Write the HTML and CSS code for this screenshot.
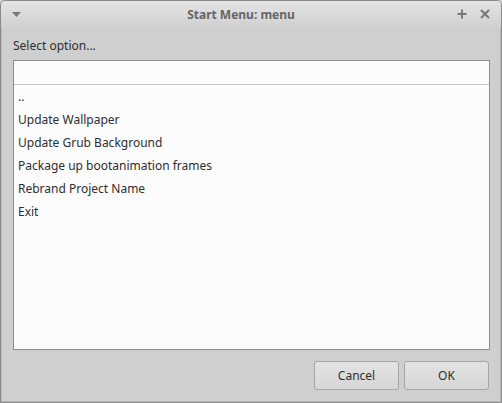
FILE: index.html
```html
<!DOCTYPE html>
<html>
<head>
<meta charset="utf-8">
<link rel="stylesheet" href="styles.css">
</head>
<body>
<div class="window">
  <div class="titlebar">
    <span class="menu-btn">
      <svg width="9" height="5" viewBox="0 0 9 5"><path d="M0 0 L9 0 L4.5 5 Z" fill="#777"/></svg>
    </span>
    <span class="title">Start Menu: menu</span>
    <span class="controls">
      <svg width="10" height="10" viewBox="0 0 10 10"><path d="M5 0.5 V9.5 M0.5 5 H9.5" stroke="#777" stroke-width="2"/></svg>
      <svg width="10" height="10" viewBox="0 0 10 10"><path d="M1 1 L9 9 M9 1 L1 9" stroke="#777" stroke-width="2"/></svg>
    </span>
  </div>
  <div class="content">
    <div class="label">Select option...</div>
    <div class="box">
      <div class="entry"></div>
      <ul class="list">
        <li>..</li>
        <li>Update Wallpaper</li>
        <li>Update Grub Background</li>
        <li>Package up bootanimation frames</li>
        <li>Rebrand Project Name</li>
        <li>Exit</li>
      </ul>
    </div>
    <div class="buttons">
      <button class="btn">Cancel</button>
      <button class="btn">OK</button>
    </div>
  </div>
</div>
</body>
</html>
```

FILE: styles.css
```css
html, body {
  margin: 0;
  padding: 0;
  background: #cfcfcf;
}
body {
  width: 502px;
  height: 403px;
  overflow: hidden;
  font-family: "Noto Sans", "DejaVu Sans", sans-serif;
  font-size: 12px;
  color: #2e2e2e;
}
.window {
  box-sizing: border-box;
  width: 502px;
  height: 403px;
  border: 1px solid #8a8a8a;
  border-radius: 5px 5px 0 0;
  background: #cfcfcf;
  display: flex;
  flex-direction: column;
  box-shadow: inset 1px 0 0 #b8b8b8, inset -1px 0 0 #b8b8b8, inset 0 -1px 0 #b8b8b8;
}
.titlebar {
  height: 27px;
  flex: none;
  display: flex;
  align-items: center;
  position: relative;
  background: linear-gradient(#e4e4e4, #d0d0d0);
  border-radius: 4px 4px 0 0;
}
.menu-btn {
  margin-left: 11px;
  display: flex;
  margin-top: -1px;
}
.title {
  flex: 1;
  text-align: center;
  font-weight: bold;
  color: #666;
  font-size: 12px;
  margin-left: 4px;
}
.controls {
  display: flex;
  gap: 13px;
  margin-right: 11px;
  margin-top: -1px;
}
.content {
  flex: 1;
  display: flex;
  flex-direction: column;
  padding: 8px 11px 4px 12px;
}
.label {
  height: 24px;
  line-height: 18px;
  color: #2e2e2e;
  padding-top: 1px;
  box-sizing: border-box;
}
.box {
  box-sizing: border-box;
  height: 290px;
  border: 1px solid #8c8c8c;
  background: #fcfcfc;
  display: flex;
  flex-direction: column;
}
.entry {
  height: 23px;
  border-bottom: 1px solid #c9c9c9;
  flex: none;
}
.list {
  list-style: none;
  margin: 0;
  padding: 0 0 0 4px;
}
.list li {
  height: 23px;
  line-height: 23px;
  color: #2e2e2e;
}
.buttons {
  display: flex;
  justify-content: flex-end;
  gap: 5px;
  margin-top: 11px;
  padding-right: 1px;
}
.btn {
  box-sizing: border-box;
  width: 85px;
  height: 29px;
  border: 1px solid #a6a6a6;
  border-radius: 3px;
  background: linear-gradient(#e3e3e3, #d6d6d6);
  font-family: "Noto Sans", "DejaVu Sans", sans-serif;
  font-size: 12px;
  color: #2e2e2e;
  padding: 0;
}
```
